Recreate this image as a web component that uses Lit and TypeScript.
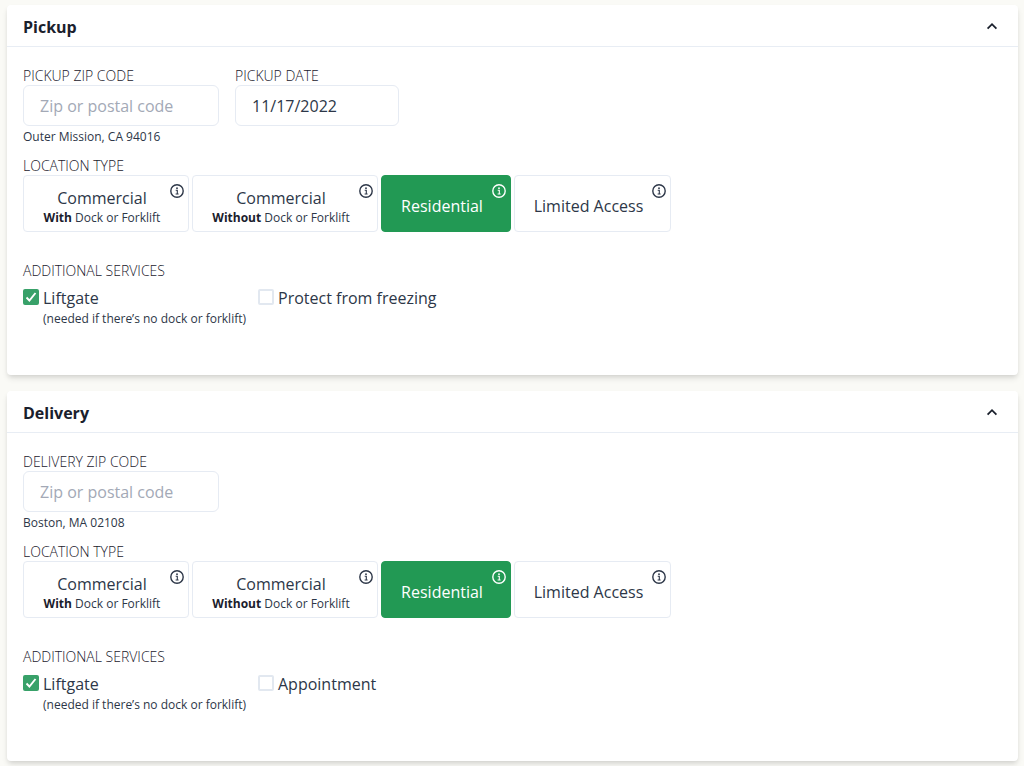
import { LitElement, html, css } from "lit";
import { customElement, property, state } from "lit/decorators.js";
import { classMap } from "lit/directives/class-map.js";

const LOCATION_TYPES = [
  { id: "dock", title: "Commercial", strong: "With", detail: "Dock or Forklift" },
  { id: "no-dock", title: "Commercial", strong: "Without", detail: "Dock or Forklift" },
  { id: "residential", title: "Residential", strong: "", detail: "" },
  { id: "limited", title: "Limited Access", strong: "", detail: "" },
];

const infoIcon = html`<svg class="info" viewBox="0 0 14 14" aria-hidden="true">
  <circle cx="7" cy="7" r="6.2" fill="none" stroke="currentColor" stroke-width="1.4" />
  <circle cx="7" cy="4.2" r="0.9" fill="currentColor" />
  <path d="M5.7 6.3H7.3V9.8M5.6 10H8.6" fill="none" stroke="currentColor" stroke-width="1.1" />
</svg>`;

@customElement("stop-card")
export class StopCard extends LitElement {
  @property() name = "";
  @property() place = "";
  @property() date = "";
  @property() service = "";
  @state() private open = true;
  @state() private selected = "residential";

  static styles = css`
    :host {
      display: block;
      background: #fff;
      border-radius: 4px;
      box-shadow: 0 4px 6px -1px rgba(0, 0, 0, 0.12), 0 2px 4px -1px rgba(0, 0, 0, 0.07);
    }
    * {
      box-sizing: border-box;
    }
    button,
    input {
      font: inherit;
      color: inherit;
      margin: 0;
    }
    .header {
      display: flex;
      justify-content: space-between;
      align-items: center;
      width: 100%;
      height: 42px;
      padding: 2px 20px 0 16px;
      border: 0;
      border-bottom: 1px solid #e8edf4;
      background: none;
      color: #1a202c;
      font-weight: 700;
      text-align: left;
      cursor: pointer;
    }
    .chevron {
      width: 12px;
      height: 12px;
    }
    .body {
      padding: 20px 16px 47px;
    }
    .fields {
      display: flex;
      gap: 16px;
    }
    .caption {
      display: block;
      margin: 0;
      padding: 0;
      font-size: 14px;
      line-height: 18px;
      font-weight: 300;
      color: #1a202c;
      text-transform: uppercase;
    }
    .box {
      display: block;
      height: 41px;
      padding: 0 16px;
      border: 1px solid #e6ebf3;
      border-radius: 6px;
      background: #fff;
    }
    .box::placeholder {
      color: #a3a9b6;
      opacity: 1;
    }
    .zip {
      width: 196px;
    }
    .date {
      width: 164px;
    }
    .place {
      margin: 0 0 9px;
      font-size: 12px;
      line-height: 22px;
    }
    .group {
      margin: 0;
      padding: 0;
      border: 0;
      min-width: 0;
    }
    .types {
      display: grid;
      grid-template-columns: 166px 186px 130px 157px;
      gap: 3px;
      margin-bottom: 30px;
    }
    .type {
      position: relative;
      height: 57px;
      padding: 4px 8px 0 0;
      border: 1px solid #e6ebf3;
      border-radius: 4px;
      background: #fff;
      cursor: pointer;
    }
    .type.detailed {
      padding-top: 8px;
    }
    .type[aria-checked="true"] {
      background: #229954;
      border-color: #229954;
      color: #fff;
    }
    .title,
    .detail {
      display: block;
      line-height: 20px;
      white-space: nowrap;
    }
    .detail {
      font-size: 12px;
    }
    .detail b {
      color: #1a202c;
    }
    .info {
      position: absolute;
      top: 8px;
      right: 4px;
      width: 14px;
      height: 14px;
    }
    .services {
      display: grid;
      grid-template-columns: 235px 1fr;
      padding-top: 6px;
    }
    .service {
      display: grid;
      grid-template-columns: 16px 1fr;
      column-gap: 4px;
      line-height: 24px;
    }
    .check {
      appearance: none;
      width: 16px;
      height: 16px;
      margin-top: 3px;
      border: 2px solid #e2e8f0;
      border-radius: 2px;
      background: #fff;
    }
    .check:checked {
      border-color: #38a169;
      background: #38a169
        url("data:image/svg+xml,%3Csvg xmlns='http://www.w3.org/2000/svg' viewBox='0 0 12 12'%3E%3Cpath d='M1.5 6.5 4.4 9.5 10.5 2' fill='none' stroke='white' stroke-width='1.9'/%3E%3C/svg%3E")
        center / 12px no-repeat;
    }
    .note {
      grid-column: 2;
      font-size: 12px;
      line-height: 18px;
      white-space: nowrap;
    }
  `;

  render() {
    return html`
      <button class="header" aria-expanded=${this.open} @click=${() => (this.open = !this.open)}>
        <span>${this.name}</span>
        <svg class="chevron" viewBox="0 0 12 12" aria-hidden="true">
          <path d="M1.6 7.6 6 3.2 10.4 7.6" fill="none" stroke="currentColor" stroke-width="1.8" />
        </svg>
      </button>
      ${this.open ? this.renderBody() : ""}
    `;
  }

  private renderBody() {
    return html`<div class="body">
      <div class="fields">
        <div>
          <label class="caption" for="zip">${this.name} zip code</label>
          <input id="zip" class="box zip" placeholder="Zip or postal code" />
        </div>
        ${this.date
          ? html`<div>
              <label class="caption" for="date">${this.name} date</label>
              <input id="date" class="box date" .value=${this.date} />
            </div>`
          : ""}
      </div>
      <p class="place">${this.place}</p>
      <div class="caption" id="types">Location type</div>
      <div class="types" role="radiogroup" aria-labelledby="types">
        ${LOCATION_TYPES.map(
          (t) => html`<button
            class=${classMap({ type: true, detailed: t.detail !== "" })}
            role="radio"
            aria-checked=${this.selected === t.id ? "true" : "false"}
            @click=${() => (this.selected = t.id)}
          >
            <span class="title">${t.title}</span>
            ${t.detail ? html`<span class="detail"><b>${t.strong}</b> ${t.detail}</span>` : ""}
            ${infoIcon}
          </button>`
        )}
      </div>
      <fieldset class="group">
        <legend class="caption">Additional services</legend>
        <div class="services">
          <label class="service">
            <input type="checkbox" class="check" checked />
            <span>Liftgate</span>
            <span class="note">(needed if there’s no dock or forklift)</span>
          </label>
          <label class="service">
            <input type="checkbox" class="check" />
            <span>${this.service}</span>
          </label>
        </div>
      </fieldset>
    </div>`;
  }
}

@customElement("app-root")
export class AppRoot extends LitElement {
  static styles = css`
    :host {
      display: flex;
      flex-direction: column;
      gap: 16px;
      box-sizing: border-box;
      min-height: 100vh;
      padding: 5px 6px 5px 7px;
      background: #fafaf6;
      color: #2d3748;
      font: 16px/24px "Segoe UI", "Open Sans", "Noto Sans", sans-serif;
    }
  `;

  render() {
    return html`
      <stop-card name="Pickup" place="Outer Mission, CA 94016" date="11/17/2022" service="Protect from freezing"></stop-card>
      <stop-card name="Delivery" place="Boston, MA 02108" service="Appointment"></stop-card>
    `;
  }
}
